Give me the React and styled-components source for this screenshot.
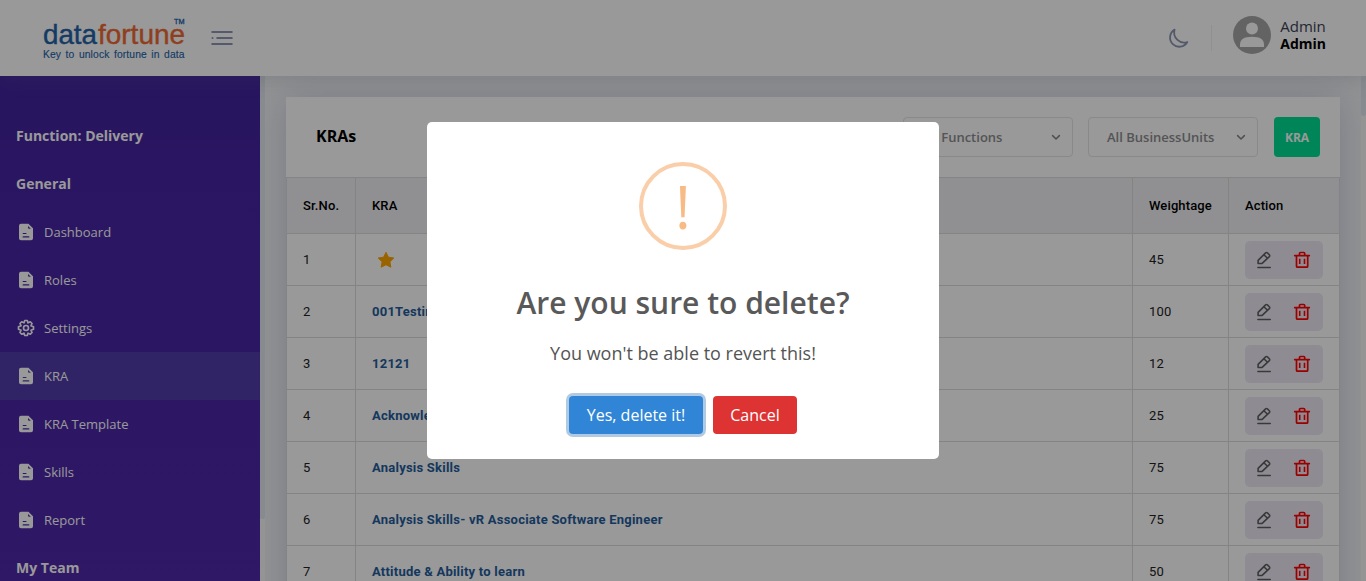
import React from "react";
import styled, { createGlobalStyle } from "styled-components";

const ui = `"Open Sans", sans-serif`;
const grid = `Roboto, sans-serif`;

const GlobalStyle = createGlobalStyle`
  * { box-sizing: border-box; }
  html, body { margin: 0; height: 100%; overflow: hidden; }
  body { font-family: ${ui}; background: #f4f5f7; }
  #root { height: 100%; }
`;

const Page = styled.div`
  height: 100vh;
  display: flex;
  flex-direction: column;
  overflow: hidden;
`;

const Header = styled.header`
  flex: none;
  height: 76px;
  display: flex;
  align-items: center;
  padding: 0 40px 0 42px;
  background: #fff;
  box-shadow: 0 3px 18px rgba(98, 113, 132, 0.22);
  z-index: 1;
`;

const Logo = styled.svg`
  flex: none;
  width: 144px;
  height: 46px;
  margin-top: 2px;
`;

const MenuIcon = styled.svg`
  width: 22px;
  height: 16px;
  margin-left: 25px;
`;

const HeaderRight = styled.div`
  margin-left: auto;
  display: flex;
  align-items: center;
`;

const Moon = styled.svg`
  width: 24px;
  height: 24px;
  margin: 1px 21px 0 0;
`;

const Divider = styled.div`
  width: 1px;
  height: 26px;
  margin-right: 21px;
  background: #f0f0f2;
`;

const Avatar = styled.svg`
  width: 38px;
  height: 38px;
  margin: -6px 9px 0 0;
`;

const UserName = styled.div`
  margin-top: -6px;
  font-size: 15px;
  line-height: 17px;
  color: #3b4256;
  strong {
    display: block;
    font-size: 14px;
    font-weight: 700;
    color: #000;
  }
`;

const Body = styled.div`
  flex: 1;
  min-height: 0;
  display: flex;
`;

const Sidebar = styled.nav`
  flex: none;
  width: 260px;
  padding-top: 36px;
  overflow: hidden;
  background: linear-gradient(#4323a0, #4f29ab);
  color: #fff;
`;

const NavHeading = styled.div`
  height: 48px;
  padding-left: 16px;
  font-size: 14px;
  font-weight: 700;
  line-height: 48px;
  white-space: nowrap;
`;

const NavItem = styled.div`
  height: 48px;
  display: flex;
  align-items: center;
  gap: 8px;
  padding-left: 16px;
  font-size: 13px;
  background: ${(p) => (p.$active ? "#503caa" : "transparent")};
  svg { width: 20px; height: 20px; }
`;

const ScrollTrack = styled.div`
  flex: none;
  width: 5px;
  background: #f7f7f7;
`;

const ScrollThumb = styled.div`
  height: ${(p) => p.$length}px;
  background: #e1e6ed;
  border-radius: 0 0 3px 3px;
`;

const Main = styled.main`
  flex: 1;
  min-width: 0;
  padding: 21px 21px 0;
  overflow: hidden;
`;

const Card = styled.section`
  background: #fff;
  min-height: 700px;
  box-shadow: 0 0 34px rgba(130, 140, 180, 0.36);
`;

const CardHead = styled.div`
  height: 80px;
  display: flex;
  align-items: center;
  padding: 0 20px 0 30px;
`;

const CardTitle = styled.h1`
  margin: -2px auto 0 0;
  font-size: 16px;
  font-weight: 700;
  color: #000;
`;

const Select = styled.div`
  width: 170px;
  height: 40px;
  margin-right: ${(p) => p.$gap}px;
  padding: 0 11px 0 18px;
  display: flex;
  align-items: center;
  justify-content: space-between;
  border: 1px solid #e5e5e7;
  border-radius: 4px;
  font-size: 13px;
  font-weight: 600;
  color: #8c8c8e;
  svg { width: 10px; height: 10px; }
`;

const AddButton = styled.button`
  width: 46px;
  height: 40px;
  padding: 0;
  border: 0;
  border-radius: 4px;
  background: #00de93;
  color: #fff;
  font: 700 12px ${ui};
`;

const Table = styled.div`
  border-left: 1px solid #dcdcde;
  border-top: 1px solid #dcdcde;
  font-family: ${grid};
  font-size: 13px;
  letter-spacing: 0.23px;
`;

const Row = styled.div`
  display: grid;
  grid-template-columns: 69px 777px 96px 111px;
  height: ${(p) => (p.$head ? 56 : 52)}px;
  background: ${(p) => (p.$head ? "#f0f0f4" : "#fff")};
  font-weight: ${(p) => (p.$head ? 500 : 400)};
  color: ${(p) => (p.$head ? "#000" : "#222")};
  letter-spacing: ${(p) => (p.$head ? "0.12px" : "inherit")};
`;

const Cell = styled.div`
  display: flex;
  align-items: center;
  padding-left: 16px;
  border-right: 1px solid #dcdcde;
  border-bottom: 1px solid #dcdcde;
  white-space: nowrap;
`;

const KraLink = styled.a`
  font-weight: 700;
  color: #245c9c;
`;

const Star = styled.svg`
  width: 18px;
  height: 18px;
  margin-left: 5px;
`;

const Actions = styled.div`
  width: 78px;
  height: 38px;
  padding: 0 11px 0 9px;
  display: flex;
  align-items: center;
  justify-content: space-between;
  border-radius: 5px;
  background: #ede9f4;
  svg { width: 20px; height: 20px; }
`;

const Backdrop = styled.div`
  position: fixed;
  inset: 0;
  z-index: 10;
  display: flex;
  align-items: center;
  justify-content: center;
  background: rgba(0, 0, 0, 0.4);
`;

const Dialog = styled.div`
  width: 512px;
  height: 337px;
  padding-top: 40px;
  display: flex;
  flex-direction: column;
  align-items: center;
  border-radius: 5px;
  background: #fff;
`;

const WarningIcon = styled.div`
  flex: none;
  width: 88px;
  height: 88px;
  display: flex;
  align-items: center;
  justify-content: center;
  border: 4px solid #facea8;
  border-radius: 50%;
  color: #f8bb86;
  font-size: 60px;
  line-height: 80px;
`;

const DialogTitle = styled.h2`
  margin: 32px 0 0;
  font-size: 30px;
  font-weight: 600;
  line-height: 42px;
  color: #595959;
`;

const DialogText = styled.p`
  margin: 17px 0 0;
  font-size: 18px;
  line-height: 24px;
  color: #545454;
`;

const DialogActions = styled.div`
  display: flex;
  gap: 10px;
  margin-top: 31px;
`;

const DialogButton = styled.button`
  width: ${(p) => p.$width}px;
  height: 38px;
  padding: 0;
  border: 0;
  border-radius: 4px;
  background: ${(p) => p.$color};
  box-shadow: ${(p) => (p.$focused ? "0 0 0 3px rgba(100, 150, 200, 0.5)" : "none")};
  color: #fff;
  font: 400 16px ${ui};
`;

const FileIcon = () => (
  <svg viewBox="0 0 20 20">
    <path
      fill="#fff"
      fillRule="evenodd"
      d="M5 1.7H12.4L17 6.3V16.3A2 2 0 0 1 15 18.3H5A2 2 0 0 1 3 16.3V3.7A2 2 0 0 1 5 1.7ZM12 4V5.6A1.2 1.2 0 0 0 13.2 6.8H14.8ZM7.2 11A.55.55 0 0 0 7.2 12.1H10A.55.55 0 0 0 10 11ZM7.2 14.3A.6.6 0 0 0 7.2 15.5H12.8A.6.6 0 0 0 12.8 14.3Z"
    />
  </svg>
);

const GearIcon = () => (
  <svg viewBox="0 0 24 24" fill="none" stroke="#fff" strokeWidth="2" strokeLinejoin="round">
    <path d="M10.5 3h3l.95 2.85 2.7-1.35 2.1 2.1-1.35 2.7L21 10.5v3l-3.1 1.2 1.35 2.7-2.1 2.1-2.7-1.35L13.5 21h-3l-.95-2.85-2.7 1.35-2.1-2.1 1.35-2.7L3 13.5v-3l3.1-1.2L4.75 6.6l2.1-2.1 2.7 1.35Z" />
    <circle cx="12" cy="12" r="3" />
  </svg>
);

const Chevron = () => (
  <svg viewBox="0 0 10 10" fill="none" stroke="#858587" strokeWidth="1.5" strokeLinecap="round" strokeLinejoin="round">
    <path d="M1.6 3.6 5 7 8.4 3.6" />
  </svg>
);

const PencilIcon = () => (
  <svg viewBox="0 0 20 20" fill="none" stroke="#606060" strokeWidth="1.6" strokeLinecap="round" strokeLinejoin="round">
    <path d="M3.9 17.5H16.2" />
    <path d="M4.1 13.5V10.4L11.6 2.9Q12.5 2 13.4 2.9L15.3 4.8Q16.2 5.7 15.3 6.6L8.4 13.1Q8 13.5 7.4 13.5ZM9.9 4.7 13.5 8.3" />
  </svg>
);

const TrashIcon = () => (
  <svg viewBox="0 0 20 20" fill="none" stroke="#ff0000" strokeWidth="1.7" strokeLinecap="round" strokeLinejoin="round">
    <path d="M2.7 5.6H17.3M4.5 5.8V16.2A1 1 0 0 0 5.5 17.2H14.7A1 1 0 0 0 15.7 16.2V5.8M7.5 5.4V3.5A1 1 0 0 1 8.5 2.5H11.7A1 1 0 0 1 12.7 3.5V5.4" />
    <path d="M7.7 8.8V14M12.5 8.8V14" strokeLinecap="butt" strokeWidth="1.6" />
  </svg>
);

const navItems = [
  ["Dashboard", FileIcon],
  ["Roles", FileIcon],
  ["Settings", GearIcon],
  ["KRA", FileIcon],
  ["KRA Template", FileIcon],
  ["Skills", FileIcon],
  ["Report", FileIcon],
];

const kras = [
  { name: null, weight: 45 },
  { name: "001Testing", weight: 100 },
  { name: "12121", weight: 12 },
  { name: "Acknowledgement", weight: 25 },
  { name: "Analysis Skills", weight: 75 },
  { name: "Analysis Skills- vR Associate Software Engineer", weight: 75 },
  { name: "Attitude & Ability to learn", weight: 50 },
];

export default function App() {
  return (
    <Page>
      <GlobalStyle />
      <Header>
        <Logo viewBox="0 0 144 46" fontFamily="Liberation Sans, sans-serif">
          <text x="1" y="28.4" fontSize="28" textLength="54" lengthAdjust="spacingAndGlyphs" fill="#2363a8" stroke="#2363a8" strokeWidth="0.4">data</text>
          <text x="56" y="28.4" fontSize="28" textLength="87" lengthAdjust="spacingAndGlyphs" fill="#ee6a33" stroke="#ee6a33" strokeWidth="0.4">fortune</text>
          <text x="132" y="7.7" fontSize="7" textLength="10.5" lengthAdjust="spacingAndGlyphs" fill="#2363a8" stroke="#2363a8" strokeWidth="0.3">TM</text>
          <text x="1" y="41.5" fontSize="10.3" wordSpacing="1.5" textLength="141.5" lengthAdjust="spacing" fill="#2363a8" stroke="#2363a8" strokeWidth="0.12">Key to unlock fortune in data</text>
        </Logo>
        <MenuIcon viewBox="0 0 22 16" fill="none" stroke="#8c97b2" strokeWidth="2" strokeLinecap="round">
          <path d="M1.2 2H20.8M6.2 8H20.8M1.5 8H1.6M1.2 14H20.8" />
        </MenuIcon>
        <HeaderRight>
          <Moon viewBox="0 0 24 24" fill="none" stroke="#8c97b2" strokeWidth="1.8" strokeLinejoin="round">
            <path d="M8.6 2.6A9.2 9.2 0 1 0 21.3 15A10 10 0 0 1 8.6 2.6Z" />
          </Moon>
          <Divider />
          <Avatar viewBox="0 0 38 38">
            <circle cx="19" cy="19" r="19" fill="#a6a6a6" />
            <circle cx="19" cy="12.5" r="6" fill="#fff" />
            <path d="M7 31V28.5C7 23.5 11 20.8 19 20.8S31 23.5 31 28.5V31Z" fill="#fff" />
          </Avatar>
          <UserName>
            Admin
            <strong>Admin</strong>
          </UserName>
        </HeaderRight>
      </Header>
      <Body>
        <Sidebar>
          <NavHeading>Function: Delivery</NavHeading>
          <NavHeading>General</NavHeading>
          {navItems.map(([label, Icon]) => (
            <NavItem key={label} $active={label === "KRA"}>
              <Icon />
              {label}
            </NavItem>
          ))}
          <NavHeading>My Team</NavHeading>
        </Sidebar>
        <ScrollTrack>
          <ScrollThumb $length={443} />
        </ScrollTrack>
        <Main>
          <Card>
            <CardHead>
              <CardTitle>KRAs</CardTitle>
              <Select $gap={15}>All Functions<Chevron /></Select>
              <Select $gap={16}>All BusinessUnits<Chevron /></Select>
              <AddButton>KRA</AddButton>
            </CardHead>
            <Table>
              <Row $head>
                <Cell>Sr.No.</Cell>
                <Cell>KRA</Cell>
                <Cell>Weightage</Cell>
                <Cell>Action</Cell>
              </Row>
              {kras.map((kra, i) => (
                <Row key={i}>
                  <Cell>{i + 1}</Cell>
                  <Cell>
                    {kra.name ? (
                      <KraLink>{kra.name}</KraLink>
                    ) : (
                      <Star viewBox="0 0 18 18">
                        <path d="M9 1.3 11.4 6.2 16.8 7 12.9 10.8 13.8 16.2 9 13.7 4.2 16.2 5.1 10.8 1.2 7 6.6 6.2Z" fill="#ffa500" stroke="#ffa500" strokeWidth="1" strokeLinejoin="round" />
                      </Star>
                    )}
                  </Cell>
                  <Cell>{kra.weight}</Cell>
                  <Cell>
                    <Actions><PencilIcon /><TrashIcon /></Actions>
                  </Cell>
                </Row>
              ))}
            </Table>
          </Card>
        </Main>
        <ScrollTrack>
          <ScrollThumb $length={40} />
        </ScrollTrack>
      </Body>
      <Backdrop>
        <Dialog role="dialog">
          <WarningIcon>!</WarningIcon>
          <DialogTitle>Are you sure to delete?</DialogTitle>
          <DialogText>You won't be able to revert this!</DialogText>
          <DialogActions>
            <DialogButton $width={134} $color="#3085d6" $focused>Yes, delete it!</DialogButton>
            <DialogButton $width={84} $color="#dd3333">Cancel</DialogButton>
          </DialogActions>
        </Dialog>
      </Backdrop>
    </Page>
  );
}
